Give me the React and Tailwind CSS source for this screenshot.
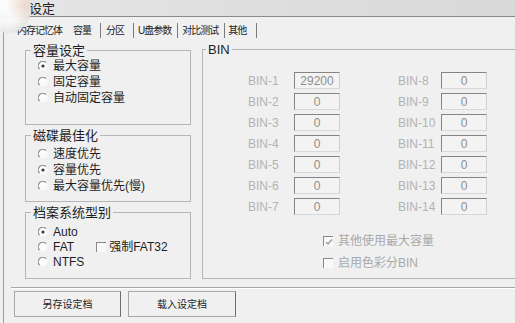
import React from 'react';

const FONT = "font-['Liberation_Sans','Noto_Sans_CJK_SC',sans-serif]";

const Radio = ({ checked }) => (
  <svg width="10" height="10" viewBox="0 0 10 10" className="shrink-0">
    <circle cx="5" cy="5" r="4.5" fill="#fbfbfb" />
    <path d="M1.6 8 A4.2 4.2 0 0 1 8 1.6" fill="none" stroke="#8c8c8c" strokeWidth="1.2" />
    {checked && <circle cx="5" cy="5" r="1.6" fill="#3a3a3a" />}
  </svg>
);

const Check = ({ checked, dim }) => (
  <span className="w-[10px] h-[10px] shrink-0 border-t border-l border-[#8a8a8a] bg-[#f9f9f9] flex items-center justify-center">
    {checked && (
      <svg width="8" height="8" viewBox="0 0 8 8">
        <polyline points="1,4 3,6 7,1.5" fill="none" stroke={dim ? '#9a9a9a' : '#333'} strokeWidth="1.4" />
      </svg>
    )}
  </span>
);

const Option = ({ checked, label, h = 'h-[16px]', children }) => (
  <div className={`${h} flex items-center pl-[12px] text-[12px] text-[#1e1e1e]`}>
    <Radio checked={checked} />
    <span className="ml-[5px] leading-none">{label}</span>
    {children}
  </div>
);

const Group = ({ title, className, children }) => (
  <fieldset className={`border border-[#b6b6b6] ${className}`}>
    <legend className="ml-[5px] px-[2px] text-[13px] leading-[15px] text-[#1e1e1e]">{title}</legend>
    {children}
  </fieldset>
);

const BinField = ({ label, value, labelW }) => (
  <div className="flex items-start h-[21px]">
    <span className={`${labelW} h-[17px] flex items-center text-[12px] text-[#b3b3b3]`}>{label}</span>
    <span className="w-[46px] h-[17px] border-t border-l border-[#858585] border-r border-b border-r-[#cfcfcf] border-b-[#d8d8d8] bg-[#f3f3f3] flex items-center justify-center text-[12px] text-[#8e8e8e]">
      {value}
    </span>
  </div>
);

const tabs = [
  { label: '内存记忆体', ml: 'ml-[13px]' },
  { label: '容量', ml: 'ml-[11px]' },
  { sep: true, ml: 'ml-[9px]' },
  { label: '分区', ml: 'ml-[5px]' },
  { sep: true, ml: 'ml-[9px]' },
  { label: 'U盘参数', ml: 'ml-[4px]' },
  { sep: true, ml: 'ml-[6px]' },
  { label: '对比测试', ml: 'ml-[4px]' },
  { sep: true, ml: 'ml-[6px]' },
  { label: '其他', ml: 'ml-[3px]' },
  { sep: true, ml: 'ml-[10px]' },
];

const left = ['BIN-1', 'BIN-2', 'BIN-3', 'BIN-4', 'BIN-5', 'BIN-6', 'BIN-7'];
const right = ['BIN-8', 'BIN-9', 'BIN-10', 'BIN-11', 'BIN-12', 'BIN-13', 'BIN-14'];

export default function App() {
  return (
    <div className={`relative w-[515px] h-[323px] overflow-hidden bg-[#f0f0f0] ${FONT}`}>
      {/* title bar */}
      <div className="h-[17px] bg-gradient-to-r from-[#e6e6e6] via-[#dedede] to-[#d9d9d9] border-b border-[#8a8a8a] flex items-center pl-[29px] text-[13px] leading-none text-[#222]">
        设定
      </div>

      {/* window orb */}
      <div className="absolute -left-[15px] -top-[13px] w-[46px] h-[46px] rounded-full bg-[radial-gradient(circle_at_85%_40%,rgba(236,196,178,0.55)_0%,rgba(236,196,178,0)_35%),radial-gradient(circle_at_42%_42%,#ffffff_0%,#f8f8f8_45%,#e6e6e6_72%,#cbcbcb_90%,rgba(200,200,200,0)_100%)] opacity-95" />

      <div className="ml-[3px] h-[306px] border-l border-[#9c9c9c]">
        {/* tabs */}
        <div className="h-[21px] flex items-start pt-[6px] text-[10px] tracking-[-1px] leading-[15px] text-[#222]">
          {tabs.map((t, i) =>
            t.sep ? (
              <span key={i} className={`${t.ml} w-px h-[15px] shrink-0 bg-[#7a7a7a]`} />
            ) : (
              <span key={i} className={`${t.ml} h-[15px] shrink-0 whitespace-nowrap`}>{t.label}</span>
            )
          )}
        </div>

        {/* content */}
        <div className="h-[249px] flex items-start pl-[21px]">
          <div className="w-[166px] shrink-0 mt-[5px] flex flex-col">
            <Group title="容量设定" className="h-[82px]">
              <Option checked label="最大容量" />
              <Option label="固定容量" />
              <Option label="自动固定容量" />
            </Group>
            <Group title="磁碟最佳化" className="h-[74px] mt-[3px] pt-[3px]">
              <Option label="速度优先" />
              <Option checked label="容量优先" />
              <Option label="最大容量优先(慢)" />
            </Group>
            <Group title="档案系统型别" className="h-[74px] mt-[3px] pt-[4px]">
              <Option checked label="Auto" h="h-[15px]" />
              <Option label="FAT" h="h-[15px]">
                <span className="ml-[22px]"><Check /></span>
                <span className="ml-[3px] leading-none">强制FAT32</span>
              </Option>
              <Option label="NTFS" h="h-[15px]" />
            </Group>
          </div>

          <fieldset className="ml-[11px] mt-[4px] w-[330px] shrink-0 h-[237px] border border-[#b6b6b6]">
            <legend className="ml-[3px] px-[2px] text-[13px] leading-[15px] text-[#1e1e1e]">BIN</legend>
            <div className="flex mt-[15px] pl-[45px]">
              <div>
                {left.map((l, i) => (
                  <BinField key={l} label={l} value={i === 0 ? '29200' : '0'} labelW="w-[46px]" />
                ))}
              </div>
              <div className="ml-[58px]">
                {right.map((l) => (
                  <BinField key={l} label={l} value="0" labelW="w-[43px]" />
                ))}
              </div>
            </div>
            <div className="mt-[11px] pl-[120px] text-[12px] text-[#a9a9a9]">
              <div className="h-[22px] flex items-center">
                <Check checked dim />
                <span className="ml-[5px] leading-none">其他使用最大容量</span>
              </div>
              <div className="h-[22px] flex items-center">
                <Check />
                <span className="ml-[5px] leading-none">启用色彩分BIN</span>
              </div>
            </div>
          </fieldset>
        </div>

        {/* etched separator */}
        <div className="ml-[7px] h-[2px] border-t border-[#a6a6a6] border-b border-b-white" />

        {/* buttons */}
        <div className="flex mt-[2px] ml-[10px] gap-[7px]">
          <button className="w-[107px] h-[26px] border border-[#a8a8a8] border-r-[#6e6e6e] bg-[#f0f0f0] text-[10px] text-[#222]">
            另存设定档
          </button>
          <button className="w-[108px] h-[26px] border border-[#a8a8a8] border-r-[#6e6e6e] bg-[#f0f0f0] text-[10px] text-[#222]">
            载入设定档
          </button>
        </div>
      </div>
    </div>
  );
}
